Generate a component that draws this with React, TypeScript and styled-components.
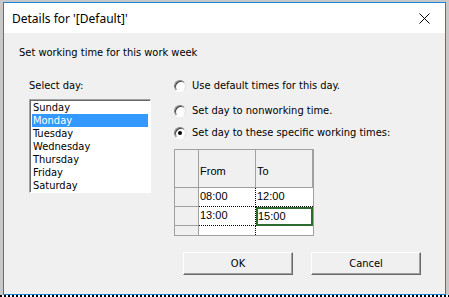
import React from 'react';
import styled, { createGlobalStyle } from 'styled-components';

const GlobalStyle = createGlobalStyle`
	html, body {
		margin: 0;
		padding: 0;
	}
	body {
		width: 449px;
		height: 297px;
		overflow: hidden;
	}
`;

const Screen = styled.div`
	width: 449px;
	height: 297px;
	box-sizing: border-box;
	padding: 2px 3px 0 3px;
	background-color: #c8c8c8;
	background-image: repeating-linear-gradient(90deg, #000 0 2px, #fff 2px 4px);
	background-size: 100% 2px;
	background-position: 0 bottom;
	background-repeat: no-repeat;
`;

const Window = styled.div`
	width: 443px;
	height: 293px;
	box-sizing: border-box;
	border: 1px solid #1883d7;
	background: #f0f0f0;
	display: flex;
	flex-direction: column;
	font-family: 'DejaVu Sans Condensed', 'DejaVu Sans', sans-serif;
	font-size: 11px;
	color: #000;
`;

const TitleBar = styled.div`
	height: 30px;
	flex: none;
	background: #fff;
	display: flex;
	align-items: center;
	justify-content: space-between;
	padding: 0 8px 0 8px;
	font-family: 'Noto Sans', sans-serif;
	font-size: 12px;
`;

const CloseButton = styled.div`
	width: 30px;
	height: 30px;
	display: flex;
	align-items: center;
	justify-content: center;
	margin-right: -2px;
`;

const Client = styled.div`
	flex: 1;
	padding: 13px 0 0 15px;
	display: flex;
	flex-direction: column;
`;

const Heading = styled.div`
	line-height: 13px;
`;

const Body = styled.div`
	display: flex;
	margin-top: 19px;
	padding-left: 10px;
	gap: 23px;
`;

const LeftColumn = styled.div`
	width: 122px;
	display: flex;
	flex-direction: column;
`;

const Label = styled.div`
	line-height: 13px;
	margin-top: 1px;
`;

const ListBox = styled.div`
	margin-top: 7px;
	height: 94px;
	box-sizing: border-box;
	border: 1px solid;
	border-color: #a0a0a0 #fff #fff #a0a0a0;
	box-shadow: inset 1px 1px #696969;
	background: #fff;
	padding: 1px 2px 0 2px;
`;

const ListItem = styled.div<{ $selected?: boolean }>`
	height: 13px;
	line-height: 13px;
	padding-left: 1px;
	background: ${p => (p.$selected ? '#3399ff' : 'transparent')};
	color: ${p => (p.$selected ? '#fff' : '#000')};
`;

const RightColumn = styled.div`
	display: flex;
	flex-direction: column;
`;

const RadioRow = styled.div<{ $top: number }>`
	display: flex;
	align-items: center;
	height: 13px;
	gap: 6px;
	margin-top: ${p => p.$top}px;
`;

const Radio = styled.span<{ $checked?: boolean }>`
	width: 12px;
	height: 12px;
	box-sizing: border-box;
	border-radius: 50%;
	border: 1px solid;
	border-color: #808080 #e0e0e0 #ffffff #808080;
	background: #fff;
	box-shadow: inset 1px 1px #404040;
	display: flex;
	align-items: center;
	justify-content: center;
	&::after {
		content: '';
		width: 4px;
		height: 4px;
		border-radius: 50%;
		background: ${p => (p.$checked ? '#000' : 'transparent')};
	}
`;

const TimesGrid = styled.div`
	margin-top: 10px;
	width: 140px;
	height: 87px;
	box-sizing: border-box;
	border: 1px solid #a0a0a0;
	display: grid;
	grid-template-columns: 24px 57px 57px;
	grid-template-rows: 38px 19px 19px 19px;
	overflow: hidden;
	font-family: 'Liberation Sans', Arial, sans-serif;
	font-size: 11px;
`;

const HeaderCell = styled.div`
	background: #f0f0f0;
	border-right: 1px solid #a0a0a0;
	border-bottom: 1px solid #a0a0a0;
	display: flex;
	align-items: center;
	padding-left: 1px;
	padding-top: 4px;
`;

const RowHeader = styled.div`
	background: #f0f0f0;
	border-right: 1px solid #a0a0a0;
	border-bottom: 1px solid #a0a0a0;
`;

const Cell = styled.div<{ $selected?: boolean; $last?: boolean; $right?: boolean }>`
	background: #fff;
	box-sizing: border-box;
	padding-left: 1px;
	line-height: 17px;
	border-right: ${p => (p.$right ? '1px dotted #000' : 'none')};
	border-bottom: ${p => (p.$last ? 'none' : '1px dotted #000')};
	${p =>
		p.$selected &&
		`
		border: 2px solid #2e6b2e;
		line-height: 14px;
		padding-left: 0;
	`}
`;

const ButtonRow = styled.div`
	display: flex;
	gap: 18px;
	margin-top: 16px;
	padding-left: 164px;
`;

const Button = styled.div`
	width: 110px;
	height: 23px;
	box-sizing: border-box;
	border: 1px solid;
	border-color: #fff #696969 #696969 #fff;
	box-shadow: inset -1px -1px #a0a0a0;
	background: #f0f0f0;
	display: flex;
	align-items: center;
	justify-content: center;
`;

const days = ['Sunday', 'Monday', 'Tuesday', 'Wednesday', 'Thursday', 'Friday', 'Saturday'];

const options = [
	{ text: 'Use default times for this day.', top: 1, checked: false },
	{ text: 'Set day to nonworking time.', top: 12, checked: false },
	{ text: 'Set day to these specific working times:', top: 9, checked: true },
];

export default function App() {
	return (
		<>
			<GlobalStyle />
			<Screen>
				<Window>
					<TitleBar>
						<span>Details for '[Default]'</span>
						<CloseButton>
							<svg width="11" height="11" viewBox="0 0 11 11">
								<path d="M0.5 0.5 L10.5 10.5 M10.5 0.5 L0.5 10.5" stroke="#000" strokeWidth="1" />
							</svg>
						</CloseButton>
					</TitleBar>
					<Client>
						<Heading>Set working time for this work week</Heading>
						<Body>
							<LeftColumn>
								<Label>Select day:</Label>
								<ListBox>
									{days.map(d => (
										<ListItem key={d} $selected={d === 'Monday'}>
											{d}
										</ListItem>
									))}
								</ListBox>
							</LeftColumn>
							<RightColumn>
								{options.map(o => (
									<RadioRow key={o.text} $top={o.top}>
										<Radio $checked={o.checked} />
										<span>{o.text}</span>
									</RadioRow>
								))}
								<TimesGrid>
									<HeaderCell />
									<HeaderCell>From</HeaderCell>
									<HeaderCell>To</HeaderCell>
									<RowHeader />
									<Cell $right>08:00</Cell>
									<Cell>12:00</Cell>
									<RowHeader />
									<Cell $right>13:00</Cell>
									<Cell $selected>15:00</Cell>
									<RowHeader />
									<Cell $right $last />
									<Cell $last />
								</TimesGrid>
							</RightColumn>
						</Body>
						<ButtonRow>
							<Button>OK</Button>
							<Button>Cancel</Button>
						</ButtonRow>
					</Client>
				</Window>
			</Screen>
		</>
	);
}
